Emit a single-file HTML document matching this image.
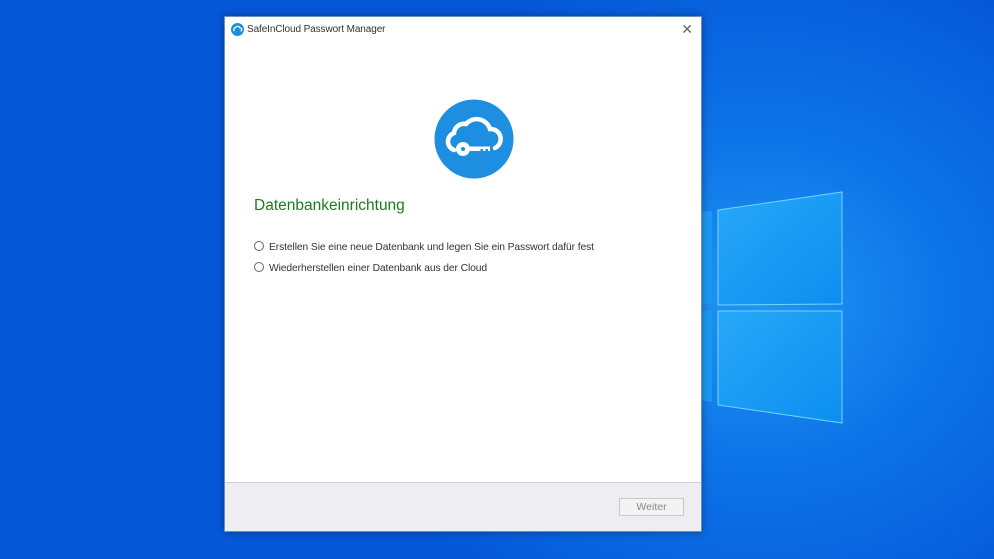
<!DOCTYPE html>
<html><head><meta charset="utf-8"><style>
html,body{margin:0;padding:0;width:994px;height:559px;overflow:hidden}
body{position:relative;background:radial-gradient(ellipse 420px 360px at 760px 300px,#2196f3 0%,#0d74e8 45%,#0558d8 100%);font-family:"Liberation Sans",sans-serif}
.win{position:absolute;left:224px;top:16px;width:478px;height:516px;background:#fff;box-shadow:0 0 8px rgba(0,0,0,.35);border:1px solid #6a8fb8;box-sizing:border-box}
.title{position:absolute;left:22px;top:7px;font-size:10px;color:#333;letter-spacing:-0.1px}
.x{position:absolute;right:8px;top:4px;font-size:14px;color:#666;font-weight:100}
.foot{position:absolute;left:0;right:0;bottom:0;height:48px;background:#eeedf2;border-top:1px solid #cfcfd6}
.btn{position:absolute;left:394px;top:15px;width:65px;height:18px;border:1px solid #c8c8c8;background:#f3f3f3;font-size:10.5px;color:#888;text-align:center;line-height:17px;box-sizing:border-box}
h1{position:absolute;left:29px;top:180px;margin:0;font-weight:normal;font-size:15.5px;color:#1a7d1a}
.opt{position:absolute;left:29px;font-size:10.3px;color:#333;letter-spacing:-0.1px}
.opt i{display:inline-block;width:8px;height:8px;border:1px solid #666;border-radius:50%;margin-right:5px;vertical-align:-1px}
</style></head><body>
<svg width="994" height="559" style="position:absolute;left:0;top:0">
<defs><linearGradient id="g" x1="0" y1="0" x2="1" y2="1"><stop offset="0" stop-color="#27a8f8"/><stop offset="1" stop-color="#0c8ef0"/></linearGradient></defs>
<polygon points="700,212 712,211 712,304 700,304" fill="#1a9af3"/>
<polygon points="718,210 842,192 842,304 718,305" fill="url(#g)" stroke="#6fd6ff" stroke-width="1"/>
<polygon points="700,311 712,311 712,402 700,400" fill="#1a9af3"/>
<polygon points="718,311 842,311 842,423 718,405" fill="url(#g)" stroke="#6fd6ff" stroke-width="1"/>
</svg>
<div class="win">
<svg style="position:absolute;left:6px;top:6px" width="13" height="13"><circle cx="6.5" cy="6.5" r="6.5" fill="#1e8fe0"/><path d="M3.5 8 a2 2 0 0 1 1-3.5 a2.5 2.5 0 0 1 4.5 0.5 a1.5 1.5 0 0 1 0.5 3" stroke="#fff" stroke-width="1.2" fill="none"/></svg>
<div class="title">SafeInCloud Passwort Manager</div>
<div class="x">✕</div>
<svg style="position:absolute;left:209px;top:82px" width="80" height="80" viewBox="0 0 80 80">
<circle cx="40" cy="40" r="39.5" fill="#1e8fe0"/>
<path d="M20 51 a9 9 0 0 1 0-17 a10 10 0 0 1 12-9 a14 14 0 0 1 24 5 a10 10 0 0 1 5 19" stroke="#fff" stroke-width="4.5" fill="none" stroke-linecap="round"/>
<circle cx="29" cy="50" r="7" fill="#fff"/><circle cx="29" cy="50" r="2" fill="#1e8fe0"/>
<path d="M34 47.5 h22 v4.5 h-2 v-2 h-2.5 v2 h-2.5 v-2 h-2.5 v2 h-12.5z" fill="#fff"/>
</svg>
<h1>Datenbankeinrichtung</h1>
<div class="opt" style="top:224px"><i></i>Erstellen Sie eine neue Datenbank und legen Sie ein Passwort dafür fest</div>
<div class="opt" style="top:245px"><i></i>Wiederherstellen einer Datenbank aus der Cloud</div>
<div class="foot"><div class="btn">Weiter</div></div>
</div>
</body></html>
